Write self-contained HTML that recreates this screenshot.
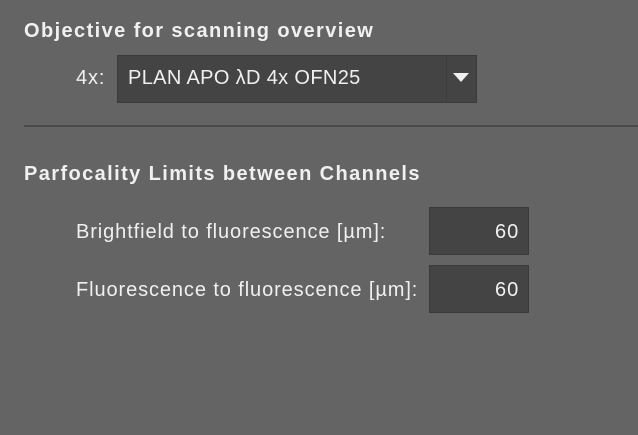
<!DOCTYPE html><html><head><style>
body{margin:0;width:638px;height:435px;background:#646464;font-family:"Liberation Sans",sans-serif;color:#f0f0f0;position:relative;overflow:hidden}
div{position:absolute;white-space:nowrap}
.h{font-weight:bold;font-size:20px;left:24px;letter-spacing:1.4px}
.l{font-size:20px;letter-spacing:0.9px}
.box{background:#444;border:1px solid #3a3a3a;box-sizing:border-box}
</style></head><body>
<div class="h" style="top:20px">Objective for scanning overview</div>
<div class="l" style="left:76px;top:67px">4x:</div>
<div class="box" style="left:117px;top:55px;width:360px;height:48px"></div>
<div class="l" style="left:128px;top:67px;letter-spacing:0.35px">PLAN APO λD 4x OFN25</div>
<div style="left:446px;top:56px;width:1px;height:46px;background:#3c3c3c"></div>
<div style="left:453px;top:73px;width:0;height:0;border-left:8px solid transparent;border-right:8px solid transparent;border-top:9px solid #f0f0f0"></div>
<div style="left:24px;top:125px;width:614px;height:2px;background:#4a4a4a"></div>
<div class="h" style="top:163px">Parfocality Limits between Channels</div>
<div class="l" style="left:76px;top:221px">Brightfield to fluorescence [µm]:</div>
<div class="box" style="left:429px;top:207px;width:100px;height:48px"></div>
<div class="l" style="left:495px;top:221px;letter-spacing:1px">60</div>
<div class="l" style="left:76px;top:279px">Fluorescence to fluorescence [µm]:</div>
<div class="box" style="left:429px;top:265px;width:100px;height:48px"></div>
<div class="l" style="left:495px;top:279px;letter-spacing:1px">60</div>
</body></html>
